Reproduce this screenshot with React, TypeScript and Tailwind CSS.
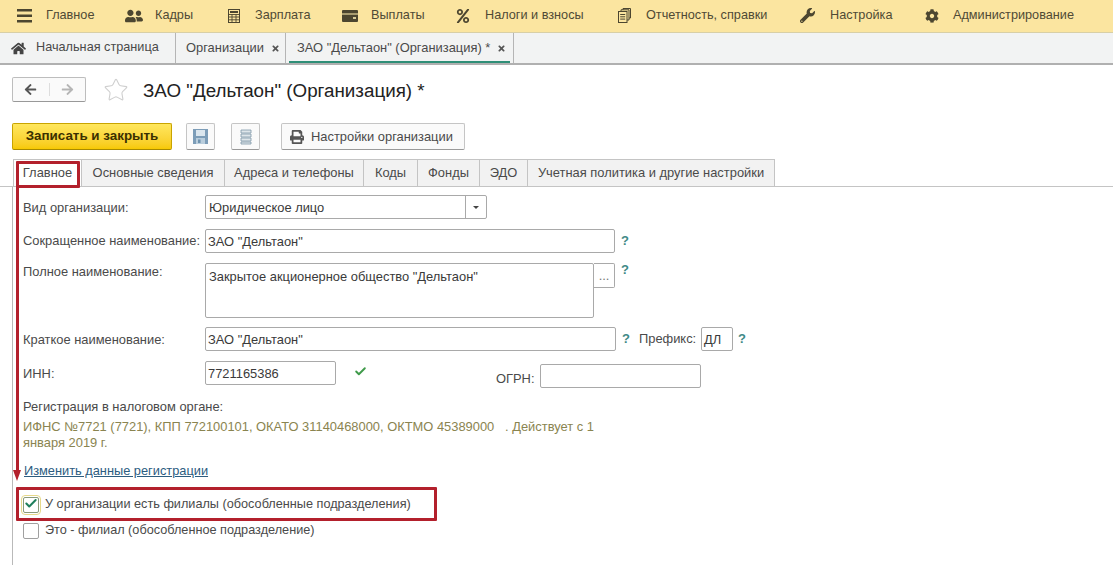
import { Check, Star } from 'lucide-react';
import { FaArrowLeft, FaArrowRight, FaCog, FaHome, FaPercent, FaPrint, FaTimes, FaUserFriends, FaWrench } from 'react-icons/fa';

function BurgerIcon() {
  return (
    <svg width="15" height="14" viewBox="0 0 15 14" fill="#4c4630">
      <rect y="0" width="15" height="2.5" />
      <rect y="5.5" width="15" height="2.5" />
      <rect y="11" width="15" height="2.5" />
    </svg>
  );
}

function CalcIcon() {
  return (
    <svg width="12" height="14" viewBox="0 0 12 14" fill="none" stroke="#4c4630">
      <rect x="0.5" y="0.5" width="11" height="13" />
      <rect x="2" y="2" width="8" height="2" fill="#4c4630" stroke="none" />
      <path d="M0.5 5.5h11M0.5 8h11M0.5 10.8h11M4 5.5v8M8 5.5v8" strokeWidth="0.9" />
    </svg>
  );
}

function WalletIcon() {
  return (
    <svg width="16" height="12" viewBox="0 0 16 12">
      <rect width="16" height="12" rx="1" fill="#4c4630" />
      <rect y="3" width="16" height="2" fill="#a89c70" />
      <rect x="11" y="7" width="3" height="2" fill="#d8cc98" />
    </svg>
  );
}

function FilesIcon() {
  return (
    <svg width="13" height="15" viewBox="0 0 13 15" fill="none" stroke="#4c4630" strokeWidth="1">
      <rect x="0.5" y="3.5" width="8.5" height="11" />
      <path d="M3 3.5V1.8h8V12H9M5 1.8V0.5h7.5V10H11" />
      <path d="M2.2 6.5h5M2.2 8.8h5M2.2 11.1h5" />
    </svg>
  );
}

function FloppyIcon() {
  return (
    <svg width="15" height="15" viewBox="0 0 15 15">
      <rect width="15" height="15" fill="#7d9db8" />
      <rect x="3" y="1" width="9" height="6" fill="#dbe6ee" />
      <rect x="3" y="9" width="9" height="6" fill="#b9cddc" />
      <rect x="5" y="10.5" width="2.5" height="3.5" fill="#6f92ae" />
    </svg>
  );
}

const menu = [
  { label: 'Главное', icon: <BurgerIcon />, iconCell: 'w-[29px]', textCell: 'w-[79px]' },
  { label: 'Кадры', icon: <FaUserFriends size={18} color="#4c4630" />, iconCell: 'w-[30px]', textCell: 'w-[73px]' },
  { label: 'Зарплата', icon: <CalcIcon />, iconCell: 'w-[27px]', textCell: 'w-[87px]' },
  { label: 'Выплаты', icon: <WalletIcon />, iconCell: 'w-[29px]', textCell: 'w-[85px]' },
  { label: 'Налоги и взносы', icon: <FaPercent size={14} color="#4c4630" />, iconCell: 'w-[29px]', textCell: 'w-[133px]' },
  { label: 'Отчетность, справки', icon: <FilesIcon />, iconCell: 'w-[28px]', textCell: 'w-[154px]' },
  { label: 'Настройка', icon: <FaWrench size={15} color="#4c4630" />, iconCell: 'w-[30px]', textCell: 'w-[95px]' },
  { label: 'Администрирование', icon: <FaCog size={14} color="#4c4630" />, iconCell: 'w-[28px]', textCell: 'w-[125px]' },
];

const formTabs = [
  { label: 'Основные сведения', w: 'w-[143px]' },
  { label: 'Адреса и телефоны', w: 'w-[139px]' },
  { label: 'Коды', w: 'w-[54px]' },
  { label: 'Фонды', w: 'w-[62px]' },
  { label: 'ЭДО', w: 'w-[48px]' },
  { label: 'Учетная политика и другие настройки', w: 'w-[247px]' },
];

function Hint({ className = '' }: { className?: string }) {
  return <span className={`text-[13px] font-bold text-[#3f8a86] ${className}`}>?</span>;
}

function Field({ value, className = '' }: { value?: string; className?: string }) {
  return (
    <div className={`h-[24px] shrink-0 rounded-[2px] border border-[#a9a9a9] bg-white px-[2px] leading-[23px] text-[#3a3a3a] ${className}`}>
      {value}
    </div>
  );
}

export default function App() {
  return (
    <div className="relative h-[565px] w-[1113px] overflow-hidden bg-white font-['Liberation_Sans',Arial,sans-serif] text-[12.9px] text-[#4a4a4a]">
      {/* main sections */}
      <div className="flex h-[33px] items-center border-b border-[#d8cfa6] bg-[#fbe5a0] pl-[17px] text-[12.7px] text-[#4f4a35]">
        {menu.map((m) => (
          <div key={m.label} className="flex items-center">
            <div className={`flex items-center ${m.iconCell}`}>{m.icon}</div>
            <span className={`whitespace-nowrap ${m.textCell}`}>{m.label}</span>
          </div>
        ))}
      </div>

      {/* open windows */}
      <div className="flex h-[32px] items-stretch border-b-2 border-[#b0b0b0] bg-[#f2f3f3]">
        <div className="flex w-[176px] items-center border-r border-[#b5b5b5] pl-[11px] text-[12.7px]">
          <FaHome size={15} color="#444" className="mr-[10px]" />
          <span>Начальная страница</span>
        </div>
        <div className="flex w-[110px] items-center border-r border-[#b5b5b5] pl-[10px]">
          <span>Организации</span>
          <FaTimes size={9} color="#555" className="ml-[7px]" />
        </div>
        <div className="relative flex w-[228px] items-center border-r border-[#b5b5b5] pl-[11px]">
          <span className="whitespace-nowrap">ЗАО "Дельтаон" (Организация) *</span>
          <FaTimes size={9} color="#555" className="ml-[7px]" />
          <div className="absolute bottom-0 left-[3px] right-[3px] h-[2px] bg-[#2f8f78]" />
        </div>
      </div>

      {/* title row */}
      <div className="ml-[12px] mt-[12px] flex h-[25px] items-center">
        <div className="flex h-[25px] w-[74px] items-center rounded-[2px] border border-[#bdbdbd] border-b-[#999] bg-[#fafafa]">
          <div className="flex w-[37px] justify-center border-r border-[#ddd]">
            <FaArrowLeft size={13} color="#555" />
          </div>
          <div className="flex w-[36px] justify-center">
            <FaArrowRight size={13} color="#b5b5b5" />
          </div>
        </div>
        <Star size={26} strokeWidth={1} className="ml-[17px] text-[#cfcfcf]" />
        <h1 className="ml-[14px] mt-[3px] whitespace-nowrap text-[18.8px] text-[#222]">ЗАО "Дельтаон" (Организация) *</h1>
      </div>

      {/* command bar */}
      <div className="ml-[12px] mt-[21px] flex h-[27px] items-stretch">
        <div className="flex w-[160px] items-center justify-center rounded-[2px] border border-[#c9a400] border-b-[#a88a00] bg-gradient-to-b from-[#ffe75c] to-[#f7c900] text-[13.4px] font-bold text-[#3a3000]">
          Записать и закрыть
        </div>
        <div className="ml-[14px] flex w-[29px] items-center justify-center rounded-[2px] border border-[#c5c5c5] border-b-[#999] bg-[#fafafa]">
          <FloppyIcon />
        </div>
        <div className="ml-[16px] flex w-[29px] items-center justify-center rounded-[2px] border border-[#c5c5c5] border-b-[#999] bg-[#fafafa]">
          <svg width="12" height="16" viewBox="0 0 12 16">
            <path d="M1 1h10v3H1zM1 5h10v3H1zM1 9h10v3H1zM1 13h10v2H1z" fill="#dfe6ea" stroke="#7d98a8" strokeWidth="0.8" />
          </svg>
        </div>
        <div className="ml-[21px] flex w-[184px] items-center rounded-[2px] border border-[#c5c5c5] border-b-[#999] bg-[#fafafa] pl-[8px]">
          <FaPrint size={14} color="#555" className="mr-[7px]" />
          <span>Настройки организации</span>
        </div>
      </div>

      {/* form tabs */}
      <div className="mt-[9px] flex h-[28px] items-stretch border-b border-[#c4c4c4] pl-[13px]">
        <div className="flex w-[69px] items-center justify-center border-x border-t border-[#c4c4c4] bg-white">Главное</div>
        {formTabs.map((t) => (
          <div key={t.label} className={`flex items-center justify-center whitespace-nowrap border-r border-t border-[#c4c4c4] bg-[#f2f2f2] ${t.w}`}>
            {t.label}
          </div>
        ))}
      </div>

      {/* form */}
      <div className="ml-[12px] h-[379px] border-l border-[#b9b9b9] pl-[10px] pt-[8px]">
        <div className="flex h-[24px] items-center">
          <span className="w-[182px] shrink-0 pt-[1px]">Вид организации:</span>
          <div className="flex h-[24px] w-[282px] rounded-[2px] border border-[#a9a9a9]">
            <span className="flex-1 px-[3px] leading-[23px] text-[#3a3a3a]">Юридическое лицо</span>
            <span className="flex w-[21px] items-center justify-center border-l border-[#a9a9a9]">
              <span className="border-x-[3px] border-t-[3px] border-x-transparent border-t-[#444]" />
            </span>
          </div>
        </div>

        <div className="mt-[10px] flex h-[24px] items-center">
          <span className="w-[182px] shrink-0">Сокращенное наименование:</span>
          <Field value={'ЗАО "Дельтаон"'} className="w-[410px]" />
          <Hint className="ml-[6px]" />
        </div>

        <div className="mt-[10px] flex h-[55px] items-start">
          <span className="-mt-[1px] w-[182px] shrink-0">Полное наименование:</span>
          <div className="h-[55px] w-[389px] shrink-0 rounded-[2px] border border-[#a9a9a9] px-[3px] pt-[3px] text-[#3a3a3a]">
            Закрытое акционерное общество "Дельтаон"
          </div>
          <div className="flex h-[25px] w-[21px] items-center justify-center rounded-r-[2px] border border-l-0 border-[#a9a9a9] text-[#777]">...</div>
          <Hint className="ml-[6px] leading-[14px]" />
        </div>

        <div className="mt-[9px] flex h-[24px] items-center">
          <span className="w-[182px] shrink-0 pt-[1px]">Краткое наименование:</span>
          <Field value={'ЗАО "Дельтаон"'} className="w-[411px]" />
          <Hint className="ml-[6px]" />
          <span className="ml-[9px] w-[62px] shrink-0">Префикс:</span>
          <Field value="ДЛ" className="w-[32px]" />
          <Hint className="ml-[5px]" />
        </div>

        <div className="mt-[10px] flex h-[27px] items-start">
          <span className="w-[182px] shrink-0 pt-[3px]">ИНН:</span>
          <Field value="7721165386" className="w-[131px]" />
          <Check size={13} strokeWidth={3.5} className="ml-[18px] mt-[4px] text-[#3f9a4a]" />
          <span className="ml-[129px] w-[44px] shrink-0 pt-[8px]">ОГРН:</span>
          <Field className="mt-[3px] w-[161px]" />
        </div>

        <p className="mt-[9px]">Регистрация в налоговом органе:</p>
        <p className="mt-[3px] w-[590px] leading-[16px] text-[#8a8450]">
          ИФНС №7721 (7721), КПП 772100101, ОКАТО 31140468000, ОКТМО 45389000&nbsp;&nbsp;&nbsp;. Действует с 1 января 2019 г.
        </p>
        <a className="mt-[10px] block pl-[1px] text-[12.8px] text-[#2c5c7f] underline">Изменить данные регистрации</a>

        <label className="mt-[11px] flex h-[26px] items-center text-[12.7px]">
          <span className="relative flex h-[16px] w-[16px] items-center justify-center rounded-[2px] border border-[#8a9a7a] outline outline-1 outline-offset-1 outline-[#e6d98a]">
            <Check size={17} strokeWidth={3.5} className="-mt-[2px] text-[#1f7f5c]" />
          </span>
          <span className="ml-[6px]">У организации есть филиалы (обособленные подразделения)</span>
        </label>
        <label className="flex h-[26px] items-center text-[12.7px]">
          <span className="h-[16px] w-[16px] rounded-[2px] border border-[#a0a0a0]" />
          <span className="ml-[6px]">Это - филиал (обособленное подразделение)</span>
        </label>
      </div>

      {/* red annotations over the form */}
      <div className="absolute left-[16px] top-[161px] h-[27px] w-[64px] rounded-[1px] border-[3px] border-[#b3202c]" />
      <div className="absolute left-[16px] top-[187px] h-[285px] w-[3px] bg-[#b3202c]" />
      <div className="absolute left-[13px] top-[470px] border-x-[4.5px] border-t-[11px] border-x-transparent border-t-[#b3202c]" />
      <div className="absolute left-[16px] top-[487px] h-[34px] w-[421px] rounded-[1px] border-[3px] border-[#b3202c]" />
    </div>
  );
}
